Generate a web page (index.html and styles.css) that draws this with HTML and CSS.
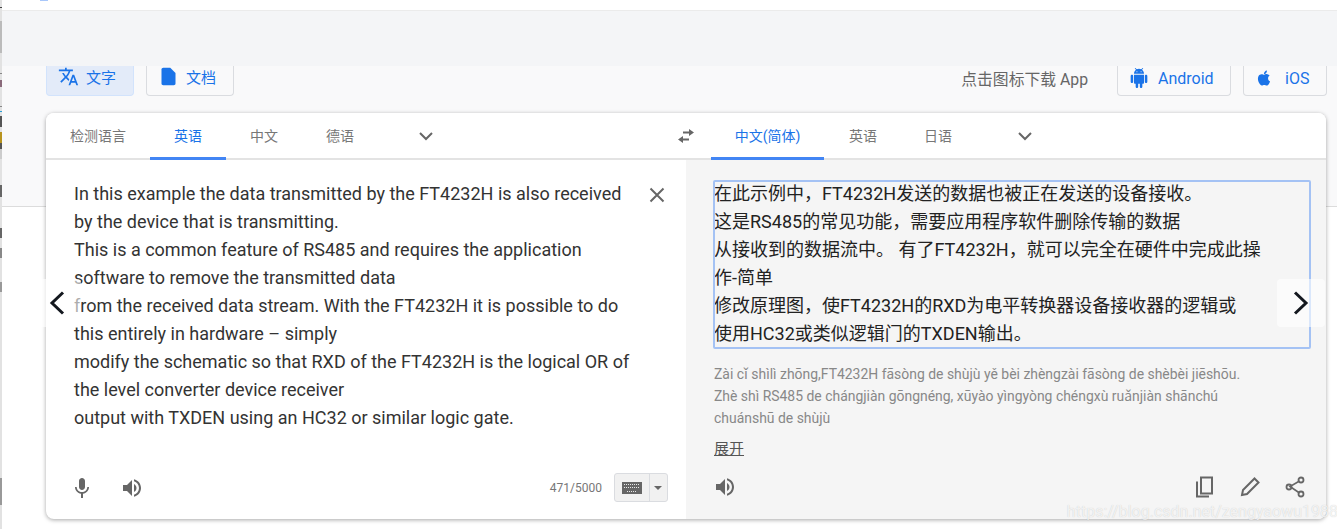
FILE: index.html
```html
<!DOCTYPE html>
<html lang="zh">
<head>
<meta charset="utf-8">
<title>翻译</title>
<link rel="stylesheet" href="styles.css">
</head>
<body>
<div class="edge"></div>
<div class="page">
  <header class="top"><span class="logo-dot"></span></header>
  <div class="band"></div>
  <div class="toolbar">
    <div class="modes">
      <button class="btn active">
        <svg class="ic" viewBox="0 0 24 24" width="24" height="24"><path fill="#1a73e8" d="M12.87 15.07l-2.54-2.51.03-.03c1.74-1.94 2.98-4.17 3.71-6.53H17V4h-7V2H8v2H1v1.99h11.17C11.5 7.92 10.44 9.75 9 11.35 8.07 10.32 7.3 9.19 6.69 8h-2c.73 1.63 1.73 3.17 2.98 4.56l-5.09 5.02L4 19l5-5 3.11 3.11.76-2.04zM18.5 10h-2L12 22h2l1.12-3h4.75L21 22h2l-4.5-12zm-2.62 7l1.62-4.33L19.12 17h-3.24z"/></svg>
        <span>文字</span>
      </button>
      <button class="btn">
        <svg class="ic" viewBox="0 0 24 24" width="24" height="24"><path fill="#1a73e8" d="M6 2c-1.1 0-2 .9-2 2v16c0 1.1.9 2 2 2h12c1.1 0 2-.9 2-2V8l-6-6H6z"/></svg>
        <span>文档</span>
      </button>
    </div>
    <div class="apps">
      <span class="apps-label">点击图标下载 App</span>
      <button class="btn app android">
        <svg viewBox="0 0 24 24" width="20" height="20"><path fill="#1a73e8" d="M6 18c0 .55.45 1 1 1h1v3.500c0 .83.67 1.500 1.500 1.500s1.500-.67 1.500-1.500V19h2v3.500c0 .83.67 1.500 1.500 1.500s1.500-.67 1.500-1.500V19h1c.55 0 1-.45 1-1V8H6v10zM3.500 8C2.670 8 2 8.670 2 9.500v7c0 .83.67 1.500 1.500 1.500S5 17.330 5 16.500v-7C5 8.670 4.330 8 3.500 8zm17 0c-.83 0-1.500.67-1.500 1.500v7c0 .83.67 1.500 1.500 1.500s1.500-.67 1.500-1.500v-7c0-.83-.67-1.500-1.500-1.500zm-4.970-5.840l1.300-1.300c.2-.2.2-.51 0-.71-.2-.2-.51-.2-.71 0l-1.480 1.480C13.850 1.230 12.950 1 12 1c-.96 0-1.860.23-2.660.63L7.850.15c-.2-.2-.51-.2-.71 0-.2.2-.2.51 0 .71l1.310 1.310C6.970 3.260 6 5.010 6 7h12c0-1.990-.97-3.750-2.470-4.840zM10 5H9V4h1v1zm5 0h-1V4h1v1z"/></svg>
        <span>Android</span>
      </button>
      <button class="btn app ios">
        <svg viewBox="0 0 24 24" width="18" height="18"><path fill="#1a73e8" d="M18.700 19.500c-.83 1.240-1.710 2.450-3.050 2.470-1.340.03-1.770-.79-3.290-.79-1.530 0-2 .77-3.270.82-1.310.05-2.300-1.320-3.140-2.530C4.250 17 2.940 12.450 4.700 9.390c.87-1.520 2.430-2.480 4.120-2.510 1.280-.02 2.500.87 3.290.87.78 0 2.260-1.070 3.800-.91.650.03 2.470.26 3.640 1.980-.09.060-2.170 1.280-2.150 3.810.03 3.020 2.650 4.030 2.680 4.040-.03.070-.42 1.440-1.380 2.830M13 3.500c.73-.83 1.940-1.460 2.940-1.500.13 1.170-.34 2.350-1.040 3.190-.69.85-1.830 1.510-2.950 1.420-.15-1.150.41-2.350 1.050-3.110z"/></svg>
        <span>iOS</span>
      </button>
    </div>
  </div>
  <main class="card">
    <section class="pane source">
      <nav class="tabs">
        <a class="tab detect">检测语言</a>
        <a class="tab on en">英语</a>
        <a class="tab zh">中文</a>
        <a class="tab de">德语</a>
        <svg class="chev" viewBox="0 0 14 9" width="14" height="9"><path d="M1 1l6 6 6-6" fill="none" stroke="#666" stroke-width="2"/></svg>
      </nav>
      <div class="src-body">
        <p class="src-text">In this example the data transmitted by the FT4232H is also received<br>by the device that is transmitting.<br>This is a common feature of RS485 and requires the application<br>software to remove the transmitted data<br>from the received data stream. With the FT4232H it is possible to do<br>this entirely in hardware – simply<br>modify the schematic so that RXD of the FT4232H is the logical OR of<br>the level converter device receiver<br>output with TXDEN using an HC32 or similar logic gate.</p>
        <svg class="close" viewBox="0 0 16 16" width="16" height="16"><path d="M1.500 1.500l13 13M14.500 1.500l-13 13" stroke="#666" stroke-width="2" fill="none"/></svg>
      </div>
      <div class="src-foot">
        <div class="foot-icons">
          <svg viewBox="0 0 24 24" width="24" height="24"><path fill="#666" d="M12 14c1.660 0 3-1.340 3-3V5c0-1.660-1.340-3-3-3S9 3.340 9 5v6c0 1.660 1.340 3 3 3zm5.300-3c0 3-2.540 5.100-5.300 5.100S6.700 14 6.700 11H5c0 3.410 2.720 6.230 6 6.720V22h2v-4.280c3.280-.48 6-3.300 6-6.720h-1.700z"/></svg>
          <svg viewBox="0 0 24 24" width="24" height="24"><path fill="#666" d="M3 9v6h4l5 5V4L7 9H3zm13.500 3c0-1.770-1.020-3.290-2.500-4.030v8.050c1.480-.73 2.500-2.250 2.500-4.020zM14 3.230v2.060c2.890.86 5 3.540 5 6.710s-2.110 5.850-5 6.710v2.060c4.010-.91 7-4.490 7-8.770s-2.990-7.860-7-8.770z"/></svg>
        </div>
        <div class="foot-right">
          <span class="count">471/5000</span>
          <div class="kbd">
            <span class="kbd-main">
              <svg viewBox="0 0 20 12" width="20" height="12"><path fill="#666" d="M0 0h20v12H0z"/><path stroke="#e8e8e8" stroke-width="1" stroke-dasharray="1 1" fill="none" d="M2 2.500h16M2 5.500h16M5 9.500h10"/></svg>
            </span>
            <span class="kbd-arrow"></span>
          </div>
        </div>
      </div>
    </section>
    <section class="pane target">
      <nav class="tabs tgt-tabs">
        <svg class="swap" viewBox="0 0 18 14" width="18" height="14"><path fill="#666" d="M12 0l5 3.500L12 7V4.500H6v-2h6zM6 7v2.500h6v2H6V14L1 10.500z"/></svg>
        <a class="tab on cn">中文(简体)</a>
        <a class="tab en2">英语</a>
        <a class="tab ja">日语</a>
        <svg class="chev" viewBox="0 0 14 9" width="14" height="9"><path d="M1 1l6 6 6-6" fill="none" stroke="#666" stroke-width="2"/></svg>
      </nav>
      <div class="tgt-body">
        <div class="result">在此示例中，FT4232H发送的数据也被正在发送的设备接收。<br>这是RS485的常见功能，需要应用程序软件删除传输的数据<br>从接收到的数据流中。 有了FT4232H，就可以完全在硬件中完成此操<br>作-简单<br>修改原理图，使FT4232H的RXD为电平转换器设备接收器的逻辑或<br>使用HC32或类似逻辑门的TXDEN输出。</div>
        <p class="pinyin">Zài cǐ shìlì zhōng,FT4232H fāsòng de shùjù yě bèi zhèngzài fāsòng de shèbèi jiēshōu.<br>Zhè shì RS485 de chángjiàn gōngnéng, xūyào yìngyòng chéngxù ruǎnjiàn shānchú<br>chuánshū de shùjù</p>
        <a class="expand">展开</a>
      </div>
      <div class="tgt-foot">
        <svg viewBox="0 0 24 24" width="24" height="24"><path fill="#666" d="M3 9v6h4l5 5V4L7 9H3zm13.500 3c0-1.770-1.020-3.290-2.500-4.030v8.050c1.480-.73 2.500-2.250 2.500-4.020zM14 3.230v2.060c2.890.86 5 3.540 5 6.710s-2.110 5.850-5 6.710v2.060c4.010-.91 7-4.490 7-8.770s-2.990-7.860-7-8.770z"/></svg>
        <div class="tgt-actions">
          <svg viewBox="0 0 24 24" width="24" height="24"><path fill="none" stroke="#666" stroke-width="2" d="M8 2.500h11v16H8zM4 6.500v15h12"/></svg>
          <svg viewBox="0 0 24 24" width="24" height="24"><path fill="none" stroke="#666" stroke-width="2" d="M4 20l1-5L16.500 3.500l4 4L9 19z"/></svg>
          <svg viewBox="0 0 24 24" width="24" height="24"><path fill="none" stroke="#666" stroke-width="1.600" d="M16.500 6L7 11.500l9.500 6.500"/><circle cx="18" cy="5" r="2.500" fill="none" stroke="#666" stroke-width="1.800"/><circle cx="6" cy="12" r="2.500" fill="none" stroke="#666" stroke-width="1.800"/><circle cx="18" cy="19" r="2.500" fill="none" stroke="#666" stroke-width="1.800"/></svg>
        </div>
      </div>
    </section>
  </main>
</div>
<div class="nav prev"><svg viewBox="0 0 16 24" width="16" height="24"><path d="M14 1.500L3 12l11 10.500" fill="none" stroke="#14181f" stroke-width="3"/></svg></div>
<div class="nav next"><svg viewBox="0 0 16 24" width="16" height="24"><path d="M2 1.500L13 12 2 22.500" fill="none" stroke="#14181f" stroke-width="3"/></svg></div>
<div class="mark">https://blog.csdn.net/zengyaowu1988</div>
</body>
</html>
```
FILE: styles.css
```css
* { box-sizing: border-box; }
html, body { margin: 0; height: 529px; overflow: hidden; }
body { background: #fff; font-family: Roboto, "Noto Sans CJK SC", sans-serif; color: #666; position: relative; }
.edge { position: absolute; left: 0; top: 0; width: 2px; height: 529px; background: linear-gradient(#e2e2e2 7px, #444 7px, #444 8px, #e2e2e2 8px, #e2e2e2 21px, #bbb 21px, #bbb 53px, #e2e2e2 53px, #e2e2e2 73px, #888 73px, #888 74px, #e2e2e2 74px, #e2e2e2 80px, #8a6a7a 80px, #8a6a7a 87px, #e2e2e2 87px, #e2e2e2 106px, #888 106px, #888 107px, #e2e2e2 107px, #e2e2e2 111px, #2a9fd6 111px, #2a9fd6 112px, #e2e2e2 112px, #e2e2e2 116px, #555 116px, #555 127px, #e2e2e2 127px, #e2e2e2 132px, #b8941f 132px, #b8941f 143px, #555 143px, #555 149px, #ccc 149px, #ccc 159px, #e2e2e2 159px, #e2e2e2 185px, #666 185px, #666 197px, #e2e2e2 197px, #e2e2e2 228px, #666 228px, #666 238px, #e2e2e2 238px, #e2e2e2 248px, #888 248px, #888 258px, #e2e2e2 258px, #e2e2e2 282px, #999 282px, #999 292px, #e2e2e2 292px, #e2e2e2 478px, #999 478px, #999 505px, #e2e2e2 505px); }
.page { display: flex; flex-direction: column; height: 529px; padding-left: 2px; background: linear-gradient(#f9f9fa 206px, #dcdcdc 206px, #dcdcdc 207px, #fff 207px); }
.top { height: 11px; background: #fff; border-bottom: 1px solid #ebebeb; padding-left: 38px; }
.logo-dot { display: block; width: 8px; height: 1px; background: #a8c7fa; }
.band { height: 55px; background: #f4f5f7; }
.toolbar { display: flex; justify-content: space-between; height: 29px; padding: 0 10px 0 44px; }
.modes { display: flex; gap: 12px; }
.apps { display: flex; align-items: flex-start; }
.btn { display: flex; align-items: center; height: 30px; border: 1px solid #dadce0; border-top: 0; border-radius: 0 0 4px 4px; background: #f9f9fa; font: 15px Roboto, "Noto Sans CJK SC", sans-serif; color: #1a73e8; padding: 0; }
.modes .btn { width: 88px; padding: 0 0 8px 12px; gap: 7px; }
.modes .btn.active { background: #e3ebf9; border-color: #d2e3fc; }
.modes .ic { width: 21px; height: 21px; margin-left: -1px; }
.apps-label { margin: 1px 29px 0 0; font-size: 15.800px; color: #666; }
.app { gap: 9px; font-size: 16px; }
.android { width: 114px; padding: 0 0 5px 11px; margin-right: 12px; }
.ios { width: 84px; padding: 0 0 5px 11px; gap: 12px; }
.card { display: flex; width: 1280px; height: 406px; margin: 18px 0 0 44px; background: #fff; border-radius: 8px; overflow: hidden; box-shadow: 0 1px 4px rgba(0,0,0,.35); }
.pane { width: 640px; display: flex; flex-direction: column; }
.tabs { display: flex; align-items: center; height: 47px; background: #fff; border-bottom: 2px solid #e3e3e3; position: relative; flex: none; }
.tab { position: relative; display: flex; align-items: center; justify-content: center; height: 47px; padding-bottom: 2px; font-size: 14px; color: #777; }
.tab.on { color: #1a73e8; }
.tab.on::after { content: ""; position: absolute; left: 0; right: 0; bottom: -1px; height: 3px; background: #4285f4; }
.detect { width: 104px; }
.en { width: 76px; }
.zh { width: 76px; }
.de { width: 76px; }
.chev { position: relative; top: 1px; flex: none; }
.source .chev { margin-left: 41px; }
.src-body { flex: 1; display: flex; justify-content: space-between; padding: 20px 21px 0 28px; }
.src-text { margin: 0; font-size: 18px; line-height: 28px; color: #333; white-space: nowrap; }
.close { margin-top: 7px; }
.src-foot { display: flex; justify-content: space-between; align-items: center; height: 60px; padding: 0 18px 3px 24px; flex: none; }
.foot-icons { display: flex; gap: 26px; }
.foot-right { display: flex; align-items: center; gap: 12px; }
.count { font-size: 12px; color: #777; }
.kbd { display: flex; width: 54px; height: 29px; border: 1px solid #dadce0; border-radius: 3px; background: #f1f1f1; }
.kbd-main { flex: 1; display: flex; align-items: center; justify-content: center; border-right: 1px solid #dadce0; }
.kbd-arrow { width: 17px; position: relative; flex: none; }
.kbd-arrow::after { content: ""; position: absolute; left: 4px; top: 12px; border: 4px solid transparent; border-top: 4px solid #666; border-bottom: 0; }
.target { background: #f5f5f5; }
.tgt-tabs { padding-left: 25px; }
.tgt-tabs .swap { margin-left: -34px; margin-right: 16px; flex: none; }
.cn { width: 113px; }
.en2 { width: 78px; }
.ja { width: 72px; }
.tgt-tabs .chev { margin-left: 44px; }
.tgt-body { flex: 1; padding: 20px 15px 0 27px; }
.result { width: 598px; height: 169px; outline: 2px solid #a4c2f4; outline-offset: -2px; border-radius: 2px; font-size: 18px; line-height: 28px; color: #222; padding: 0 0 0 1px; white-space: nowrap; }
.pinyin { margin: 14px 0 0 1px; font-size: 13.950px; line-height: 22px; color: #888; white-space: nowrap; }
.expand { display: block; width: max-content; margin: 8px 0 0 1px; font-size: 15px; color: #555; text-decoration: underline; }
.tgt-foot { display: flex; justify-content: space-between; align-items: center; height: 60px; padding: 0 19px 5px 27px; flex: none; }
.tgt-actions { display: flex; gap: 21px; }
.nav { position: absolute; top: 279px; width: 48px; height: 48px; display: flex; align-items: center; justify-content: center; background: rgba(255,255,255,.6); border-radius: 4px; }
.prev { left: 33px; }
.next { left: 1277px; }
.mark { position: absolute; right: -1px; top: 502px; font-size: 16px; color: rgba(255,255,255,.75); text-shadow: 0 0 1px rgba(0,0,0,.2); white-space: nowrap; }
```
